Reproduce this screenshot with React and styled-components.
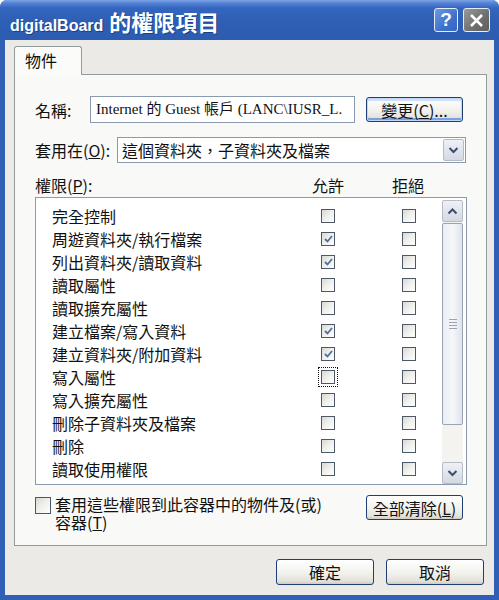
import React from 'react';
import styled, { createGlobalStyle, css } from 'styled-components';

const GlobalStyle = createGlobalStyle`
  body {
    margin: 0;
    background: #ffffff;
  }
`;

const ui = `"Noto Sans CJK TC", "Liberation Sans", sans-serif`;

const Window = styled.div`
  width: 499px;
  height: 600px;
  box-sizing: border-box;
  display: flex;
  flex-direction: column;
  background: #2f60b6;
  border-radius: 7px 7px 0 0;
  padding: 0 5px 5px 5px;
  font-family: ${ui};
  font-size: 16px;
  color: #111;
`;

const TitleBar = styled.div`
  height: 40px;
  margin: 0 -5px;
  padding: 0 9px 0 10px;
  display: flex;
  align-items: center;
  border-radius: 7px 7px 0 0;
  background: linear-gradient(
    #7ea6e6 0px,
    #5583d6 3px,
    #3566bf 8px,
    #2f5fb5 50%,
    #2c5cb0 100%
  );
`;

const TitleText = styled.div`
  flex: 1;
  color: #fff;
  font-family: "Liberation Sans", ${ui};
  font-weight: bold;
  font-size: 16px;
  text-shadow: 1px 1px 0 #1b3f86;
  white-space: nowrap;
  padding-top: 2px;

  span {
    font-family: ${ui};
    font-size: 22px;
    margin-left: 6px;
  }
`;

const CaptionButton = styled.div`
  width: 24px;
  height: 24px;
  box-sizing: border-box;
  border: 1px solid #e6ecf8;
  border-radius: 3px;
  display: flex;
  align-items: center;
  justify-content: center;
  margin-left: ${(p) => (p.$gap ? '5px' : '0')};
  ${(p) =>
    p.$gray
      ? css`
          width: 27px;
          background: linear-gradient(135deg, #9a9a9a, #6e6e6e 60%, #5e5e5e);
        `
      : css`
          background: linear-gradient(135deg, #6d9ae6, #3f71cc 60%, #3566c0);
        `}
  color: #fff;
  font-family: "Liberation Sans", sans-serif;
  font-weight: bold;
  font-size: 19px;
`;

const Body = styled.div`
  flex: 1;
  background: #ebeae6;
  padding: 6px 7px 9px 9px;
  display: flex;
  flex-direction: column;
`;

const TabRow = styled.div`
  display: flex;
  position: relative;
  z-index: 1;
`;

const Tab = styled.div`
  width: 68px;
  height: 29px;
  box-sizing: border-box;
  background: #fbfbf9;
  border: 1px solid #919b9c;
  border-bottom: none;
  border-radius: 3px 3px 0 0;
  padding: 2px 0 0 10px;
  line-height: 22px;
  margin-bottom: -1px;
`;

const Panel = styled.div`
  height: 472px;
  box-sizing: border-box;
  border: 1px solid #919b9c;
  background: #f9f9f7;
  padding: 21px 19px 0 20px;
  display: flex;
  flex-direction: column;
`;

const FieldRow = styled.div`
  display: flex;
  align-items: center;
  margin-bottom: ${(p) => p.$mb || 0}px;
`;

const Label = styled.div`
  width: ${(p) => p.$w}px;
  flex-shrink: 0;
  white-space: nowrap;
  line-height: 20px;
`;

const TextBox = styled.div`
  width: 265px;
  height: 27px;
  box-sizing: border-box;
  border: 1px solid #8a9bb0;
  background: #fff;
  font-family: "Liberation Serif", "Noto Sans CJK TC", serif;
  font-size: 15px;
  line-height: 25px;
  padding-left: 5px;
  white-space: nowrap;
  overflow: hidden;
`;

const Button = styled.div`
  width: ${(p) => p.$w || 97}px;
  height: ${(p) => p.$h || 25}px;
  box-sizing: border-box;
  border: 1px solid #1f3f74;
  border-radius: 3px;
  background: linear-gradient(#ffffff, #f2f1ec 55%, #e3e1da 88%, #cfcbc1);
  display: flex;
  align-items: center;
  justify-content: center;
  white-space: nowrap;
  line-height: 20px;
  margin-left: ${(p) => p.$ml || 0}px;
  ${(p) =>
    p.$focus &&
    css`
      box-shadow: inset 0 0 0 1px #c3d6f5, inset 0 -2px 0 1px #7aa0e4,
        inset 0 2px 0 1px #cfe0fb;
    `}
`;

const Select = styled.div`
  width: 349px;
  height: 26px;
  box-sizing: border-box;
  border: 1px solid #8a9bb0;
  background: #fff;
  display: flex;
  align-items: center;
  padding: 0 1px 0 4px;
`;

const SelectText = styled.div`
  flex: 1;
  white-space: nowrap;
`;

const ArrowButton = styled.div`
  width: 21px;
  height: 22px;
  box-sizing: border-box;
  border: 1px solid #b5bcc7;
  border-radius: 2px;
  background: linear-gradient(#eef1f6, #d3d9e3);
  display: flex;
  align-items: center;
  justify-content: center;
`;

const HeaderRow = styled.div`
  display: grid;
  grid-template-columns: 1fr 60px 20px 60px 29px;
  line-height: 20px;
  margin-top: 12px;
  margin-bottom: 2px;
`;

const HeaderCell = styled.div`
  text-align: center;
`;

const ListBox = styled.div`
  height: 288px;
  box-sizing: border-box;
  border: 1px solid #8a9bb0;
  background: #fff;
  display: flex;
`;

const Rows = styled.div`
  flex: 1;
  padding-top: 6px;
`;

const Row = styled.div`
  display: grid;
  grid-template-columns: 1fr 14px 67px 14px 26px;
  align-items: center;
  height: 23px;
  padding-left: 16px;
  white-space: nowrap;
`;

const Check = styled.div`
  width: 14px;
  height: 14px;
  box-sizing: border-box;
  border: 1px solid #4d5866;
  background: linear-gradient(135deg, #d9d9d3 0%, #eeeeea 45%, #ffffff 100%);
  display: flex;
  align-items: center;
  justify-content: center;
  ${(p) =>
    p.$focus &&
    css`
      outline: 1px dotted #111;
      outline-offset: 2px;
    `}
`;

const BigCheck = styled(Check)`
  width: 16px;
  height: 17px;
  flex-shrink: 0;
  margin-top: 3px;
`;

const ScrollBar = styled.div`
  width: 21px;
  margin: 2px 3px 0 0;
  background: #f4f3ef;
  display: flex;
  flex-direction: column;
`;

const ScrollArrow = styled(ArrowButton)`
  width: 21px;
  height: 22px;
`;

const Thumb = styled.div`
  height: 202px;
  margin-top: 1px;
  box-sizing: border-box;
  border: 1px solid #9aa4b3;
  border-radius: 2px;
  background: linear-gradient(90deg, #e9edf3, #f6f7f9 50%, #dfe4ec);
  display: flex;
  flex-direction: column;
  align-items: center;
  justify-content: center;
  gap: 2px;
`;

const Grip = styled.div`
  width: 8px;
  height: 1px;
  background: #9aa4b3;
`;

const Track = styled.div`
  flex: 1;
`;

const BottomRow = styled.div`
  display: flex;
  align-items: flex-start;
  margin-top: 9px;
`;

const InheritText = styled.div`
  width: 280px;
  margin-left: 4px;
  line-height: 18px;
  padding-top: 1px;
`;

const Spacer = styled.div`
  flex: 1;
`;

const Footer = styled.div`
  display: flex;
  justify-content: flex-end;
  padding: 13px 0 0 0;
  margin-right: 3px;
`;

const CheckMark = () => (
  <svg width="9" height="8" viewBox="0 0 9 8">
    <path d="M1 4 L3.5 6.5 L8 1" stroke="#4f6f9f" strokeWidth="1.8" fill="none" />
  </svg>
);

const Chevron = ({ up }) => (
  <svg width="11" height="8" viewBox="0 0 11 8">
    <path
      d={up ? 'M1.5 6.5 L5.5 2.5 L9.5 6.5' : 'M1.5 2 L5.5 6 L9.5 2'}
      stroke="#3d4f6e"
      strokeWidth="2"
      fill="none"
    />
  </svg>
);

const permissions = [
  { name: '完全控制', allow: false },
  { name: '周遊資料夾/執行檔案', allow: true },
  { name: '列出資料夾/讀取資料', allow: true },
  { name: '讀取屬性', allow: false },
  { name: '讀取擴充屬性', allow: false },
  { name: '建立檔案/寫入資料', allow: true },
  { name: '建立資料夾/附加資料', allow: true },
  { name: '寫入屬性', allow: false, focus: true },
  { name: '寫入擴充屬性', allow: false },
  { name: '刪除子資料夾及檔案', allow: false },
  { name: '刪除', allow: false },
  { name: '讀取使用權限', allow: false },
];

export default function App() {
  return (
    <>
      <GlobalStyle />
      <Window>
        <TitleBar>
          <TitleText>
            digitalBoard<span>的權限項目</span>
          </TitleText>
          <CaptionButton>?</CaptionButton>
          <CaptionButton $gray $gap>
            <svg width="15" height="15" viewBox="0 0 15 15">
              <path d="M2 2 L13 13 M13 2 L2 13" stroke="#fff" strokeWidth="2.6" />
            </svg>
          </CaptionButton>
        </TitleBar>
        <Body>
          <TabRow>
            <Tab>物件</Tab>
          </TabRow>
          <Panel>
            <FieldRow $mb={14}>
              <Label $w={55}>名稱:</Label>
              <TextBox>Internet 的 Guest 帳戶 (LANC\IUSR_L.</TextBox>
              <Button $focus $ml={11}>
                變更(<u>C</u>)...
              </Button>
            </FieldRow>
            <FieldRow>
              <Label $w={82}>
                套用在(<u>O</u>):
              </Label>
              <Select>
                <SelectText>這個資料夾，子資料夾及檔案</SelectText>
                <ArrowButton>
                  <Chevron />
                </ArrowButton>
              </Select>
            </FieldRow>
            <HeaderRow>
              <div>
                權限(<u>P</u>):
              </div>
              <HeaderCell>允許</HeaderCell>
              <div />
              <HeaderCell>拒絕</HeaderCell>
            </HeaderRow>
            <ListBox>
              <Rows>
                {permissions.map((p) => (
                  <Row key={p.name}>
                    <div>{p.name}</div>
                    <Check $focus={p.focus}>{p.allow && <CheckMark />}</Check>
                    <div />
                    <Check />
                  </Row>
                ))}
              </Rows>
              <ScrollBar>
                <ScrollArrow>
                  <Chevron up />
                </ScrollArrow>
                <Thumb>
                  <Grip />
                  <Grip />
                  <Grip />
                  <Grip />
                </Thumb>
                <Track />
                <ScrollArrow>
                  <Chevron />
                </ScrollArrow>
              </ScrollBar>
            </ListBox>
            <BottomRow>
              <BigCheck />
              <InheritText>
                套用這些權限到此容器中的物件及(或)容器(<u>T</u>)
              </InheritText>
              <Spacer />
              <Button $w={97} $h={25} style={{ marginTop: '1px', marginRight: '4px' }}>
                全部清除(<u>L</u>)
              </Button>
            </BottomRow>
          </Panel>
          <Footer>
            <Button $w={98} $h={26}>
              確定
            </Button>
            <Button $w={98} $h={26} $ml={12}>
              取消
            </Button>
          </Footer>
        </Body>
      </Window>
    </>
  );
}
